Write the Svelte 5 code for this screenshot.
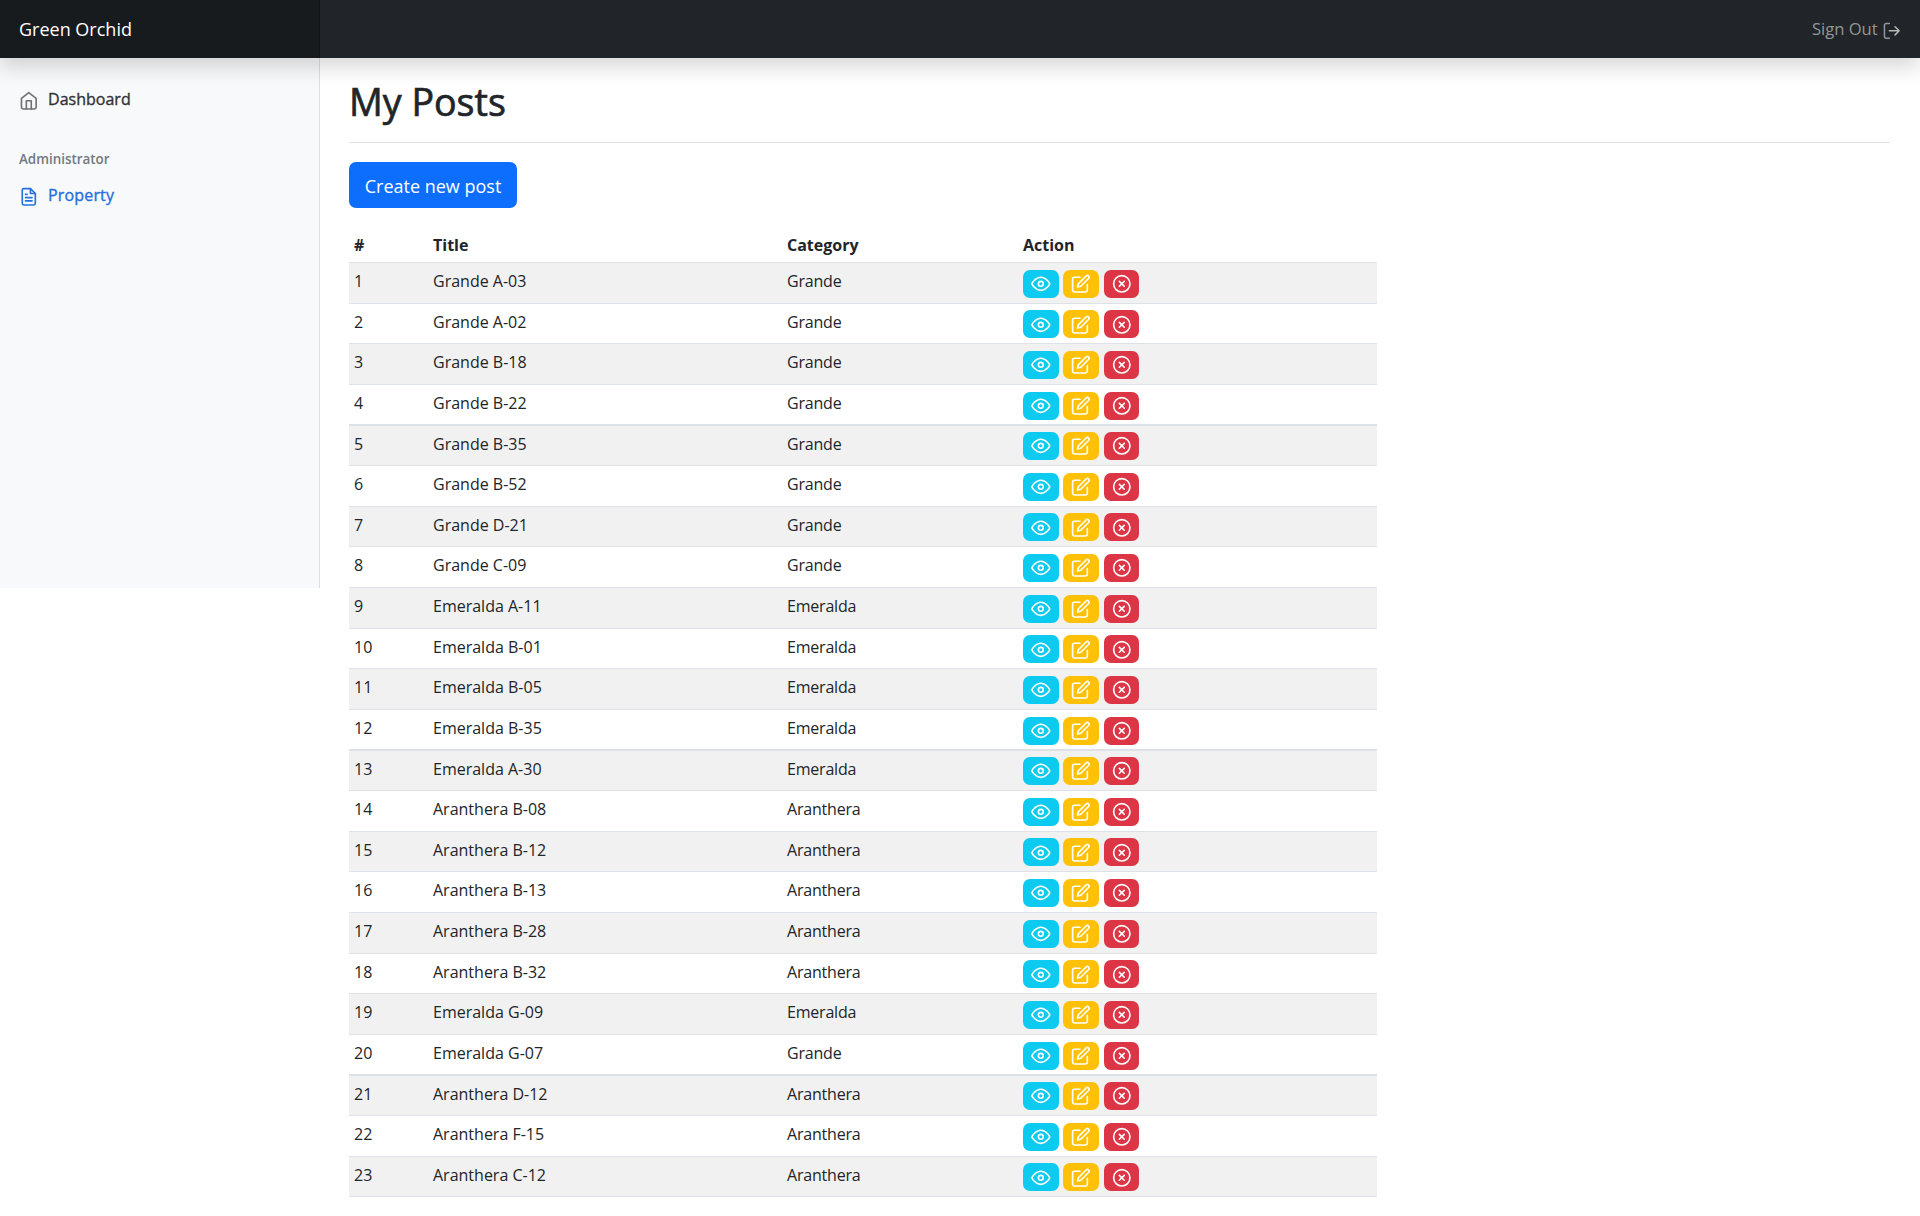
<script>
  const posts = [
    ['Grande A-03', 'Grande'],
    ['Grande A-02', 'Grande'],
    ['Grande B-18', 'Grande'],
    ['Grande B-22', 'Grande'],
    ['Grande B-35', 'Grande'],
    ['Grande B-52', 'Grande'],
    ['Grande D-21', 'Grande'],
    ['Grande C-09', 'Grande'],
    ['Emeralda A-11', 'Emeralda'],
    ['Emeralda B-01', 'Emeralda'],
    ['Emeralda B-05', 'Emeralda'],
    ['Emeralda B-35', 'Emeralda'],
    ['Emeralda A-30', 'Emeralda'],
    ['Aranthera B-08', 'Aranthera'],
    ['Aranthera B-12', 'Aranthera'],
    ['Aranthera B-13', 'Aranthera'],
    ['Aranthera B-28', 'Aranthera'],
    ['Aranthera B-32', 'Aranthera'],
    ['Emeralda G-09', 'Emeralda'],
    ['Emeralda G-07', 'Grande'],
    ['Aranthera D-12', 'Aranthera'],
    ['Aranthera F-15', 'Aranthera'],
    ['Aranthera C-12', 'Aranthera']
  ];
</script>

<header>
  <a class="brand" href="#home">Green Orchid</a>
  <button class="signout">
    <span>Sign Out</span>
    <svg class="icon" viewBox="0 0 24 24"><path d="M9 21H5a2 2 0 0 1-2-2V5a2 2 0 0 1 2-2h4" /><path class="bright" d="M16 17l5-5-5-5M21 12H9" /></svg>
  </button>
</header>

<div class="layout">
  <nav>
    <a class="link" href="#dashboard">
      <svg class="icon muted" viewBox="0 0 24 24"><path d="M3 9l9-7 9 7v11a2 2 0 0 1-2 2H5a2 2 0 0 1-2-2z" /><path d="M9 22V12h6v10" /></svg>
      <span>Dashboard</span>
    </a>
    <h6>Administrator</h6>
    <a class="link active" href="#property">
      <svg class="icon" viewBox="0 0 24 24"><path d="M14 2H6a2 2 0 0 0-2 2v16a2 2 0 0 0 2 2h12a2 2 0 0 0 2-2V8z" /><path d="M14 2v6h6M16 13H8M16 17H8M10 9H8" /></svg>
      <span>Property</span>
    </a>
  </nav>

  <main>
    <div class="title"><h1>My Posts</h1></div>
    <a class="create" href="#create">Create new post</a>
    <div class="table">
      <div class="row head">
        <span>#</span><span>Title</span><span>Category</span><span>Action</span>
      </div>
      {#each posts as [title, category], i}
        <div class="row" class:odd={i % 2 === 0} class:thick={i % 8 === 3}>
          <span>{i + 1}</span>
          <span>{title}</span>
          <span class="category">{category}</span>
          <div class="actions">
            <button class="view" aria-label="View"><svg class="icon" viewBox="0 0 24 24"><path d="M1 12s4-8 11-8 11 8 11 8-4 8-11 8-11-8-11-8z" /><circle cx="12" cy="12" r="3" /></svg></button>
            <button class="edit" aria-label="Edit"><svg class="icon" viewBox="0 0 24 24"><path d="M11 4H4a2 2 0 0 0-2 2v14a2 2 0 0 0 2 2h14a2 2 0 0 0 2-2v-7" /><path d="M18.5 2.5a2.121 2.121 0 0 1 3 3L12 15l-4 1 1-4 9.500-9.500z" /></svg></button>
            <button class="delete" aria-label="Delete"><svg class="icon" viewBox="0 0 24 24"><circle cx="12" cy="12" r="10" /><path d="M15 9l-6 6M9 9l6 6" /></svg></button>
          </div>
        </div>
      {/each}
    </div>
  </main>
</div>

<style>
  :global(body) {
    background: #fff;
    color: #212529;
    font-family: 'Open Sans', 'Noto Sans', sans-serif;
    font-size: 16px;
    overflow: hidden;
  }
  :global(*) { box-sizing: border-box; }
  a { text-decoration: none; color: inherit; }
  button { border: 0; background: none; padding: 0; font: inherit; }
  .icon {
    display: block;
    flex: none;
    width: 19.6px;
    height: 19.6px;
    fill: none;
    stroke: currentColor;
    stroke-width: 2;
    stroke-linecap: round;
    stroke-linejoin: round;
  }
  header {
    position: relative;
    z-index: 1;
    display: flex;
    justify-content: space-between;
    height: 58px;
    background: #212529;
    box-shadow: 0 10px 20px rgba(0, 0, 0, 0.15);
  }
  .brand {
    width: 320px;
    padding: 0 19px;
    font-size: 18px;
    line-height: 58px;
    color: #fff;
    background: rgba(0, 0, 0, 0.25);
    box-shadow: inset -1px 0 0 rgba(0, 0, 0, 0.25);
  }
  .signout {
    display: flex;
    align-items: center;
    gap: 4px;
    padding: 0 18.7px 2px 0;
    color: #949698;
    font-size: 16.6px;
  }
  .signout .icon { margin-top: 5px; stroke-width: 1.8; }
  .bright { stroke: #b5b7b8; }
  .layout { display: flex; align-items: flex-start; }
  nav {
    width: 320px;
    height: 530px;
    flex: none;
    padding: 22px 19px 0 18.5px;
    background: #f8f9fb;
    box-shadow: inset -1px 0 0 rgba(0, 0, 0, 0.1);
  }
  .link {
    display: flex;
    gap: 10px;
    height: 40px;
    line-height: 38px;
    font-size: 16px;
    color: #333;
    -webkit-text-stroke: 0.35px currentColor;
  }
  .link .icon { margin-top: 11px; }
  .muted { color: #727272; }
  .active { color: #2470dc; letter-spacing: 0.15px; }
  h6 {
    margin: 29px 0 4px 0.5px;
    font-size: 13.4px;
    font-weight: 600;
    line-height: 20px;
    height: 23px;
    color: #727980;
  }
  main { flex: 1; padding: 0 30px 0 29px; }
  .title { height: 85px; border-bottom: 1px solid #dee2e6; padding-top: 17px; }
  h1 {
    margin: 0;
    font-size: 37.6px;
    font-weight: 400;
    line-height: 54px;
    -webkit-text-stroke: 0.7px currentColor;
  }
  .create {
    display: block;
    width: 168px;
    height: 46px;
    margin: 19px 0 17px;
    border-radius: 7px;
    background: #0d6efd;
    color: #fff;
    font-size: 18px;
    line-height: 49px;
    text-align: center;
  }
  .table { width: 1028px; }
  .row {
    display: grid;
    grid-template-columns: 79px 354px 236px 1fr;
    height: 40.625px;
    padding-left: 5px;
    border-bottom: 1px solid #dee2e6;
    line-height: 36.8px;
  }
  .head { height: 38px; font-weight: 700; line-height: 40px; }
  .odd { background: #f1f1f1; }
  .thick { border-bottom-width: 2px; }
  .category { letter-spacing: -0.2px; }
  .actions { display: flex; gap: 4.8px; padding-top: 6.7px; color: #fff; }
  .actions button {
    display: grid;
    place-items: center;
    width: 35.6px;
    height: 28px;
    border-radius: 7px;
    color: #fff;
  }
  .view { background: #0dcaf0; }
  .edit { background: #ffc107; }
  .delete { background: #dc3545; }
</style>
